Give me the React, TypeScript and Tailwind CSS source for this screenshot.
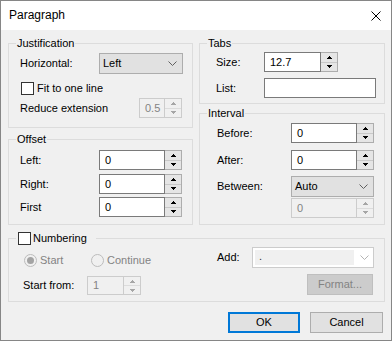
import type { ReactNode } from "react";

function Arrow({ down, off }: { down?: boolean; off?: boolean }) {
  return (
    <svg width="5" height="3" viewBox="0 0 5 3" className={off ? "fill-[#a6a6a6]" : "fill-black"}>
      <path d={down ? "M0 0h5v1h-1v1h-1v1h-1v-1h-1v-1h-1z" : "M2 0h1v1h1v1h1v1H0V2h1V1h1z"} />
    </svg>
  );
}

function Chevron({ off }: { off?: boolean }) {
  return (
    <svg width="9" height="5" viewBox="0 0 9 5" fill="none" className={off ? "stroke-[#b4b4b4]" : "stroke-[#606060]"}>
      <path d="M0.5 0.5 L4.5 4.5 L8.5 0.5" />
    </svg>
  );
}

function Spin({ value, w, h = "h-[20px]", off }: { value: string; w: string; h?: string; off?: boolean }) {
  return (
    <div className={`flex ${w} ${h}`}>
      <div
        className={`flex-1 flex items-center pl-[5px] border ${
          off ? "border-[#cccccc] bg-[#f0f0f0] text-[#838383]" : "border-[#7a7a7a] bg-white"
        }`}
      >
        {value}
      </div>
      <div className={`w-[17px] flex flex-col border-y border-r ${off ? "border-[#cccccc]" : "border-[#adadad]"}`}>
        <div className={`flex-1 flex items-center justify-center border-b ${off ? "bg-[#f0f0f0] border-[#dcdcdc]" : "bg-[#e5e5e5] border-[#c8c8c8]"}`}>
          <Arrow off={off} />
        </div>
        <div className={`flex-1 flex items-center justify-center ${off ? "bg-[#f0f0f0]" : "bg-[#e5e5e5]"}`}>
          <Arrow down off={off} />
        </div>
      </div>
    </div>
  );
}

function Select({ value, w }: { value: string; w: string }) {
  return (
    <div className={`flex items-center justify-between ${w} h-[21px] border border-[#adadad] bg-[#e1e1e1] pl-[3px] pr-[5px]`}>
      <span>{value}</span>
      <Chevron />
    </div>
  );
}

function Check() {
  return <div className="w-[13px] h-[13px] border border-[#333333] bg-white shrink-0" />;
}

function Radio({ checked }: { checked?: boolean }) {
  return (
    <div className="w-[13px] h-[13px] rounded-full border border-[#bcbcbc] bg-[#f0f0f0] flex items-center justify-center shrink-0">
      {checked && <div className="w-[7px] h-[7px] rounded-full bg-[#a3a3a3]" />}
    </div>
  );
}

function Group({ title, className, children }: { title: ReactNode; className: string; children?: ReactNode }) {
  return (
    <div className={`border border-[#dcdcdc] ${className}`}>
      <div className="-mt-[8px] ml-[7px] w-fit px-[1px] bg-[#f0f0f0] h-[15px] flex items-center">{title}</div>
      {children}
    </div>
  );
}

export default function App() {
  return (
    <div className="w-[392px] h-[341px] border border-[#868686] bg-[#f0f0f0] flex flex-col font-['Segoe_UI','Liberation_Sans',Arial,sans-serif] text-[11px] leading-[15px] text-black select-none">
      <div className="h-[29px] shrink-0 bg-white flex items-center justify-between pl-[8px] pr-[10px] text-[12px]">
        <span>Paragraph</span>
        <svg width="10" height="10" viewBox="0 0 10 10" fill="none" stroke="black" strokeWidth="1">
          <path d="M0.5 0.5 L9.5 9.5 M9.5 0.5 L0.5 9.5" />
        </svg>
      </div>

      <div className="flex gap-[6px] pl-[7px] pr-[6px] pt-[13px]">
        <div className="w-[185px] flex flex-col gap-[11px]">
          <Group title="Justification" className="h-[85px]">
            <div className="mt-[2px] h-[21px] flex items-center pl-[11px]">
              <span className="w-[79px]">Horizontal:</span>
              <Select value="Left" w="w-[84px]" />
            </div>
            <div className="mt-[4px] h-[20px] flex items-center pl-[12px]">
              <Check />
              <span className="ml-[3px]">Fit to one line</span>
            </div>
            <div className="h-[20px] flex items-center pl-[11px]">
              <span className="w-[119px]">Reduce extension</span>
              <Spin value="0.5" w="w-[43px]" off />
            </div>
          </Group>

          <Group title="Offset" className="h-[86px]">
            <div className="mt-[3px] h-[20px] flex items-center pl-[11px]">
              <span className="w-[79px]">Left:</span>
              <Spin value="0" w="w-[83px]" />
            </div>
            <div className="mt-[4px] h-[20px] flex items-center pl-[11px]">
              <span className="w-[79px]">Right:</span>
              <Spin value="0" w="w-[83px]" />
            </div>
            <div className="mt-[3px] h-[20px] flex items-center pl-[11px]">
              <span className="w-[79px]">First</span>
              <Spin value="0" w="w-[83px]" />
            </div>
          </Group>
        </div>

        <div className="w-[186px] flex flex-col gap-[9px]">
          <Group title="Tabs" className="h-[61px]">
            <div className="mt-[1px] h-[20px] flex items-center pl-[16px]">
              <span className="w-[48px]">Size:</span>
              <Spin value="12.7" w="w-[74px]" />
            </div>
            <div className="mt-[6px] h-[20px] flex items-center pl-[16px]">
              <span className="w-[48px]">List:</span>
              <div className="w-[112px] h-[20px] border border-[#7a7a7a] bg-white" />
            </div>
          </Group>

          <Group title="Interval" className="h-[112px]">
            <div className="mt-[2px] h-[20px] flex items-center pl-[17px]">
              <span className="w-[74px]">Before:</span>
              <Spin value="0" w="w-[83px]" />
            </div>
            <div className="mt-[7px] h-[20px] flex items-center pl-[17px]">
              <span className="w-[74px]">After:</span>
              <Spin value="0" w="w-[83px]" />
            </div>
            <div className="mt-[6px] flex items-start pl-[17px]">
              <span className="w-[74px] h-[21px] flex items-center">Between:</span>
              <div className="flex flex-col">
                <Select value="Auto" w="w-[83px]" />
                <div className="mt-[1px]">
                  <Spin value="0" w="w-[83px]" off />
                </div>
              </div>
            </div>
          </Group>
        </div>
      </div>

      <div className="pl-[7px] pr-[6px] mt-[13px]">
        <Group
          className="h-[64px]"
          title={
            <span className="flex items-center pl-[1px] pr-[8px]">
              <Check />
              <span className="ml-[2px]">Numbering</span>
            </span>
          }
        >
          <div className="flex justify-between">
            <div className="flex flex-col">
              <div className="mt-[6px] h-[16px] flex items-center pl-[15px] text-[#838383]">
                <div className="w-[67px] flex items-center">
                  <Radio checked />
                  <span className="ml-[3px]">Start</span>
                </div>
                <div className="flex items-center">
                  <Radio />
                  <span className="ml-[3px]">Continue</span>
                </div>
              </div>
              <div className="mt-[8px] h-[19px] flex items-center pl-[14px]">
                <span className="w-[64px]">Start from:</span>
                <Spin value="1" w="w-[54px]" h="h-[19px]" off />
              </div>
            </div>

            <div className="flex flex-col items-end pr-[10px] mt-[1px]">
              <div className="h-[21px] flex items-center">
                <span className="w-[35px]">Add:</span>
                <div className="w-[122px] h-[21px] border border-[#cccccc] bg-white flex items-center pl-[2px] pr-[4px]">
                  <div className="flex-1 h-[15px] bg-[#f0f0f0] pl-[4px] text-[#333333] leading-[13px]">.</div>
                  <div className="ml-[6px]">
                    <Chevron off />
                  </div>
                </div>
              </div>
              <div className="mt-[6px] mr-[1px] w-[66px] h-[21px] border border-[#bfbfbf] bg-[#cccccc] text-[#838383] flex items-center justify-center">
                Format...
              </div>
            </div>
          </div>
        </Group>
      </div>

      <div className="mt-[10px] flex justify-end gap-[10px] pr-[8px]">
        <div className="w-[72px] h-[21px] border-2 border-[#0078d7] bg-[#e1e1e1] flex items-center justify-center">OK</div>
        <div className="w-[73px] h-[21px] border border-[#adadad] bg-[#e1e1e1] flex items-center justify-center">Cancel</div>
      </div>
    </div>
  );
}
